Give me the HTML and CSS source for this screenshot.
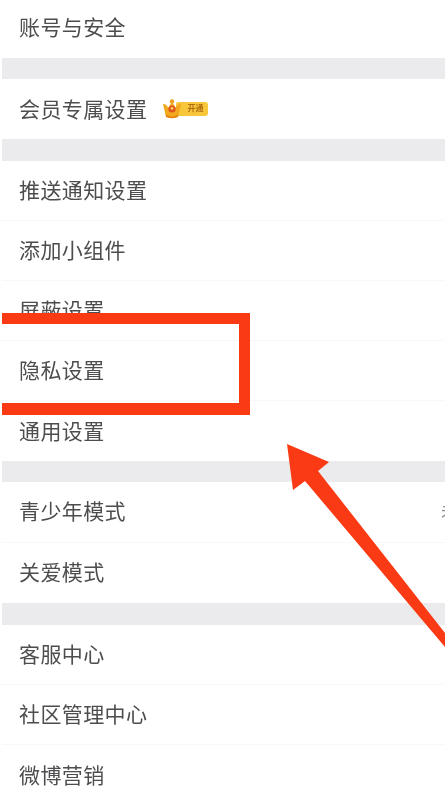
FILE: index.html
```html
<!DOCTYPE html>
<html lang="zh-CN">
<head>
  <meta charset="UTF-8">
  <meta name="viewport" content="width=device-width, initial-scale=1.0">
  <title>设置</title>
  <link rel="stylesheet" href="styles.css">
</head>
<body>
  <div id="page">
    <div class="group">
      <div class="row first">账号与安全</div>
    </div>
    <div class="group wide-gap">
      <div class="row">
        会员专属设置
        <span class="vip">
          <svg class="crown" xmlns="http://www.w3.org/2000/svg" viewBox="0 0 18 20">
            <path d="M0 5 Q4 5 5 9 L9 3 L13 9 Q14 5 18 5 L15.5 16 Q9 19 2.5 16 Z" fill="#f2a91e"/>
            <path d="M2.5 15.5 Q9 19 15.5 15.5 L15 18 Q9 20.5 3 18 Z" fill="#e8860c"/>
            <circle cx="9" cy="2.4" r="2.2" fill="#f0a01c"/>
            <circle cx="9" cy="10" r="3.6" fill="#e2531c"/>
            <circle cx="9" cy="9.4" r="1.4" fill="#f7d35a"/>
          </svg>
          <span class="vip-label">开通</span>
        </span>
      </div>
    </div>
    <div class="group">
      <div class="row">推送通知设置</div>
      <div class="row">添加小组件</div>
      <div class="row">屏蔽设置</div>
      <div class="row">隐私设置</div>
      <div class="row">通用设置</div>
    </div>
    <div class="group wide-gap tall-rows">
      <div class="row between">青少年模式<span class="state">未开启</span></div>
      <div class="row">关爱模式</div>
    </div>
    <div class="group">
      <div class="row">客服中心</div>
      <div class="row">社区管理中心</div>
      <div class="row">微博营销</div>
    </div>
  </div>

  <div id="mark-box"></div>
  <svg id="mark-arrow" xmlns="http://www.w3.org/2000/svg" viewBox="0 0 445 803">
    <path d="M287 444 L329 462 L318 471 L445 633 L445 647 L305 481 L293 490 Z" fill="#fa3a14"/>
  </svg>
</body>
</html>
```

FILE: styles.css
```css
html, body {
  margin: 0;
  height: 100%;
  overflow: hidden;
  background: #ffffff;
}

#page {
  margin-left: 2px;
  height: 803px;
  overflow: hidden;
  font-family: "Liberation Sans", "Noto Sans CJK SC", sans-serif;
  font-size: 21px;
  letter-spacing: 0.4px;
  color: #4d4d4f;
  filter: blur(0.35px);
}

.group {
  background: #ffffff;
  border-bottom: 21px solid #ebeaec;
}

.group.wide-gap {
  border-bottom-width: 22px;
}

.row {
  display: flex;
  align-items: center;
  height: 60px;
  padding: 0 0 3px 17px;
  box-sizing: border-box;
  border-bottom: 1px solid #f8f8f8;
}

.tall-rows .row {
  height: 60.5px;
}

.row:last-child {
  border-bottom: none;
}

.row.first {
  height: 58px;
  padding-bottom: 6px;
}

.row.between {
  justify-content: space-between;
  white-space: nowrap;
}

.state {
  font-size: 16px;
  letter-spacing: 0;
  color: #8a8a8c;
  margin-right: -44px;
}

.vip {
  display: flex;
  align-items: center;
  margin: 3px 0 0 16px;
}

.crown {
  position: relative;
  z-index: 1;
  width: 18px;
  height: 20px;
}

.vip-label {
  width: 32px;
  height: 14px;
  margin-left: -5px;
  padding-left: 6px;
  box-sizing: border-box;
  background: #f8c63a;
  border-radius: 2px 3px 3px 2px;
  font-size: 8px;
  font-weight: bold;
  line-height: 14px;
  letter-spacing: 0;
  text-align: center;
  color: #b06c12;
}

#mark-box {
  position: absolute;
  left: 2px;
  top: 313px;
  width: 237px;
  height: 79px;
  border: 11px solid #fa3a14;
  border-left: none;
  border-bottom-width: 12px;
}

#mark-arrow {
  position: absolute;
  left: 0;
  top: 0;
  width: 445px;
  height: 803px;
}
```
